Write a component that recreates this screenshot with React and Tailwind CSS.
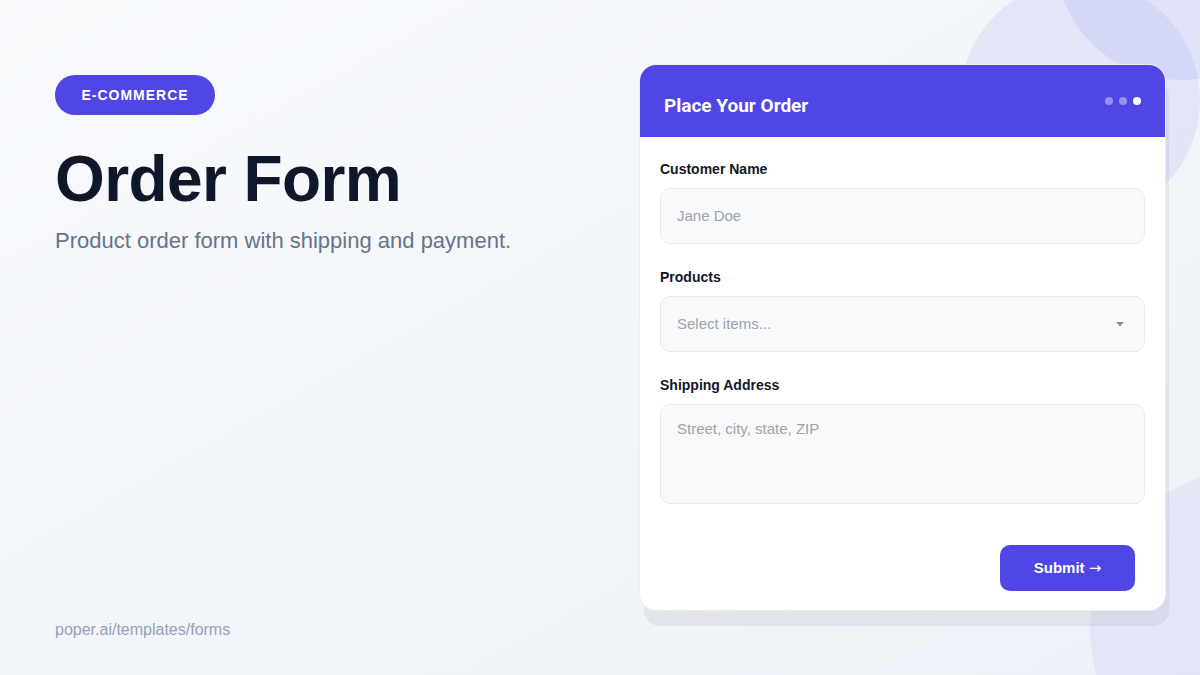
import React from "react";

const sans = { fontFamily: '"Liberation Sans", Arial, sans-serif' };

function Field({ label, children }) {
  return (
    <div className="flex flex-col">
      <div className="text-[14px] leading-[20px] font-bold text-[#111827] mb-[9px]">{label}</div>
      {children}
    </div>
  );
}

export default function App() {
  return (
    <div
      className="relative w-[1200px] h-[675px] overflow-hidden bg-gradient-to-br from-[#f8fafc] to-[#eef1f7]"
      style={sans}
    >
      {/* decorative circles */}
      <div className="absolute left-[960px] top-[-20px] w-[240px] h-[240px] rounded-full bg-[rgba(99,102,241,0.1)]" />
      <div className="absolute left-[1055px] top-[-170px] w-[250px] h-[250px] rounded-full bg-[rgba(99,102,241,0.12)]" />
      <div className="absolute left-[1090px] top-[470px] w-[320px] h-[320px] rounded-full bg-[rgba(99,102,241,0.08)]" />

      <div className="relative flex h-full">
        {/* left column */}
        <div className="w-[640px] shrink-0 h-full flex flex-col pl-[55px] pt-[75px] pb-[33px]">
          <div className="w-[160px] h-[40px] rounded-full bg-[#4f46e5] flex items-center justify-center text-white text-[14px] font-bold tracking-[1px]">
            E-COMMERCE
          </div>
          <h1 className="mt-[29px] text-[64px] leading-[70px] font-bold text-[#0f172a] tracking-[-0.6px]">
            Order Form
          </h1>
          <p className="mt-[10px] text-[22px] leading-[33px] text-[#64748b]">
            Product order form with shipping and payment.
          </p>
          <div className="mt-auto text-[16px] leading-[24px] text-[#94a3b8]">poper.ai/templates/forms</div>
        </div>

        {/* card */}
        <div className="pt-[65px] shrink-0">
          <div className="w-[525px] h-[545px] rounded-[16px] overflow-hidden bg-white shadow-[0_0_0_1px_#eceef2,4px_16px_0_rgba(15,23,42,0.06)] flex flex-col">
            <div className="h-[72px] bg-[#4f46e5] flex items-center justify-between px-6 shrink-0">
              <div
                className="mt-[10px] text-white text-[19px] font-bold"
                style={{ fontFamily: 'Roboto, "Liberation Sans", sans-serif' }}
              >
                Place Your Order
              </div>
              <div className="flex items-center gap-1.5">
                <span className="w-2 h-2 rounded-full bg-white/40" />
                <span className="w-2 h-2 rounded-full bg-white/40" />
                <span className="w-2 h-2 rounded-full bg-white" />
              </div>
            </div>

            <div className="flex flex-col px-5 pt-[22px] gap-[23px]">
              <Field label="Customer Name">
                <div className="h-[56px] rounded-[10px] bg-[#f8f9fb] border border-[#e8eaef] flex items-center px-4 text-[15px] text-[#9ca3af]">
                  Jane Doe
                </div>
              </Field>
              <Field label="Products">
                <div className="h-[56px] rounded-[10px] bg-[#f8f9fb] border border-[#e8eaef] flex items-center justify-between pl-4 pr-5 text-[15px] text-[#9ca3af]">
                  <span>Select items...</span>
                  <svg width="8" height="5" viewBox="0 0 8 5">
                    <path d="M0 0 L8 0 L4 4.5 Z" fill="#8b93a1" />
                  </svg>
                </div>
              </Field>
              <Field label="Shipping Address">
                <div className="h-[100px] rounded-[10px] bg-[#f8f9fb] border border-[#e8eaef] px-4 pt-[13px] text-[15px] leading-[22px] text-[#9ca3af]">
                  Street, city, state, ZIP
                </div>
              </Field>
            </div>

            <div className="flex justify-end px-5 mt-[41px]">
              <button className="mr-[10px] w-[135px] h-[46px] rounded-[10px] bg-[#4f46e5] text-white text-[15px] font-bold flex items-center justify-center">
                Submit{" "}
                <span className="ml-[4px]" style={{ fontFamily: '"DejaVu Sans", sans-serif', fontWeight: 400 }}>
                  →
                </span>
              </button>
            </div>
          </div>
        </div>
      </div>
    </div>
  );
}
